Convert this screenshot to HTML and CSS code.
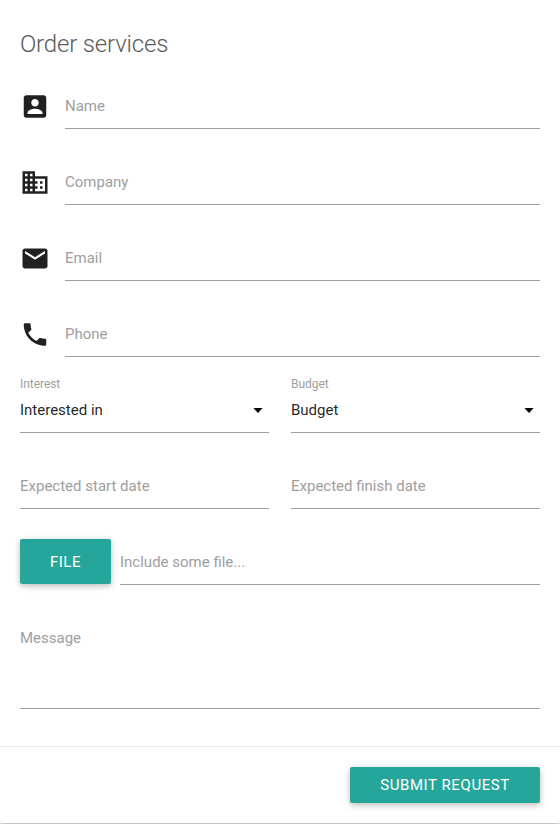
FILE: index.html
```html
<!DOCTYPE html>
<html lang="en">
<head>
<meta charset="utf-8">
<title>Order services</title>
<link rel="stylesheet" href="styles.css">
</head>
<body>
<form class="card">
  <div class="card-content">
    <h1 class="title">Order services</h1>
    <div class="row">
      <svg class="icon" viewBox="0 0 24 24"><path d="M3 5v14c0 1.1.89 2 2 2h14c1.1 0 2-.9 2-2V5c0-1.1-.9-2-2-2H5c-1.11 0-2 .9-2 2zm12 4c0 1.66-1.34 3-3 3s-3-1.34-3-3 1.34-3 3-3 3 1.34 3 3zm-9 8c0-2 4-3.1 6-3.1s6 1.1 6 3.1v1H6v-1z"/></svg>
      <div class="field">Name</div>
    </div>
    <div class="row">
      <svg class="icon" viewBox="0 0 24 24"><path d="M12 7V3H2v18h20V7H12zM6 19H4v-2h2v2zm0-4H4v-2h2v2zm0-4H4V9h2v2zm0-4H4V5h2v2zm4 12H8v-2h2v2zm0-4H8v-2h2v2zm0-4H8V9h2v2zm0-4H8V5h2v2zm10 12h-8v-2h2v-2h-2v-2h2v-2h-2V9h8v10zm-2-8h-2v2h2v-2zm0 4h-2v2h2v-2z"/></svg>
      <div class="field">Company</div>
    </div>
    <div class="row">
      <svg class="icon" viewBox="0 0 24 24"><path d="M20 4H4c-1.1 0-1.99.9-1.99 2L2 18c0 1.1.9 2 2 2h16c1.1 0 2-.9 2-2V6c0-1.1-.9-2-2-2zm0 4l-8 5-8-5V6l8 5 8-5v2z"/></svg>
      <div class="field">Email</div>
    </div>
    <div class="row">
      <svg class="icon" viewBox="0 0 24 24"><path d="M6.62 10.79c1.44 2.83 3.76 5.14 6.59 6.59l2.2-2.2c.27-.27.67-.36 1.02-.24 1.12.37 2.33.57 3.57.57.55 0 1 .45 1 1V20c0 .55-.45 1-1 1-9.39 0-17-7.61-17-17 0-.55.45-1 1-1h3.5c.55 0 1 .45 1 1 0 1.25.2 2.45.57 3.57.11.35.03.74-.25 1.02l-2.2 2.2z"/></svg>
      <div class="field">Phone</div>
    </div>
    <div class="row pair">
      <div class="select">
        <span class="caption">Interest</span>
        <div class="field value">Interested in<svg class="caret" viewBox="0 0 10 5"><path d="M.4 0h9.2L5 5z"/></svg></div>
      </div>
      <div class="select">
        <span class="caption">Budget</span>
        <div class="field value">Budget<svg class="caret" viewBox="0 0 10 5"><path d="M.4 0h9.2L5 5z"/></svg></div>
      </div>
    </div>
    <div class="row pair">
      <div class="field">Expected start date</div>
      <div class="field">Expected finish date</div>
    </div>
    <div class="row file-row">
      <button class="btn btn-file" type="button">File</button>
      <div class="field">Include some file...</div>
    </div>
    <div class="field message">Message</div>
  </div>
  <div class="card-action">
    <button class="btn btn-submit" type="button">Submit request</button>
  </div>
</form>
</body>
</html>
```
FILE: styles.css
```css
* { box-sizing: border-box; }
body {
  margin: 0;
  min-height: 824px;
  background: #fff;
  font-family: Roboto, sans-serif;
  font-size: 15px;
  color: rgba(0, 0, 0, 0.87);
}
.card {
  height: 823px;
  margin: 0;
  background: #fff;
  border-radius: 2px;
  box-shadow: 0 1px 0 0 rgba(0,0,0,.06), 0 2px 5px 0 rgba(0,0,0,.16), 0 2px 10px 0 rgba(0,0,0,.12);
}
.card-content { height: 746px; padding: 20px 20px 0; }
.title {
  margin: 0 0 20px;
  font-size: 24px;
  line-height: 48px;
  font-weight: 300;
  letter-spacing: -0.17px;
  color: #5a5a5a;
}
.row {
  display: flex;
  height: 45px;
  margin-bottom: 31px;
}
.row .field { flex: 1; }
.row:nth-child(2) { margin-top: -4px; }
.icon {
  flex: none;
  width: 30px;
  height: 30px;
  margin: 7px 15px 0 0;
  fill: rgba(0, 0, 0, 0.87);
}
.icon path { transform: translateY(0.3px); }
.field {
  height: 45px;
  line-height: 44px;
  border-bottom: 1px solid #9e9e9e;
  color: #9e9e9e;
}
.pair { gap: 22px; }
.select { position: relative; flex: 1; }
.caption {
  position: absolute;
  top: -12px;
  left: 0;
  font-size: 12px;
  line-height: 16px;
  letter-spacing: -0.05px;
  color: #9e9e9e;
}
.value {
  display: flex;
  align-items: center;
  justify-content: space-between;
  color: rgba(0, 0, 0, 0.87);
}
.caret { width: 10px; height: 5px; margin: 1px 6.5px 0 0; fill: #000; }
.file-row { gap: 9px; }
.btn {
  padding: 0 30px;
  border: 0;
  border-radius: 2px;
  background: #26a69a;
  color: #fff;
  font: 400 15px/36px Roboto, sans-serif;
  letter-spacing: 0.5px;
  text-transform: uppercase;
  box-shadow: 0 2px 5px 0 rgba(0,0,0,.16), 0 2px 10px 0 rgba(0,0,0,.12);
}
.btn-file { width: 91px; height: 45px; margin-top: -1px; }
.message { height: 93px; }
.card-action {
  display: flex;
  justify-content: flex-end;
  height: 77px;
  padding: 20px;
  border-top: 1px solid rgba(160, 160, 160, 0.2);
}
.btn-submit { width: 190px; height: 36px; padding: 0; letter-spacing: 0.58px; }
```
